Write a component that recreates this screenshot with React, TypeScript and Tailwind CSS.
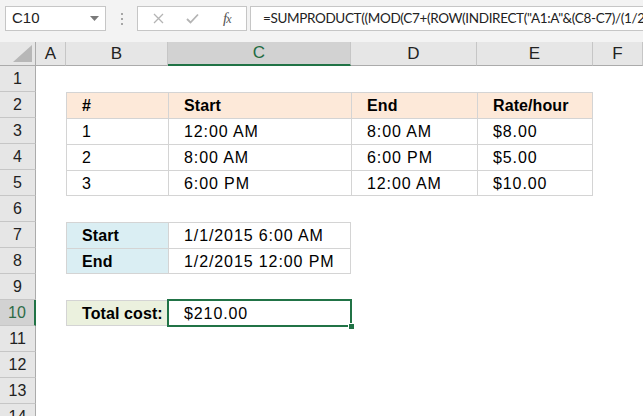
import React from 'react';

type Cell = { text?: string; bold?: boolean; bg?: string; border?: string };

const cols = ['A', 'B', 'C', 'D', 'E', 'F'];

// border classes per cell: t/l always for table cells, r/b at table edges
const rows: Record<number, Record<string, Cell>> = {
  2: {
    B: { text: '#', bold: true, bg: 'bg-[#fde9d9]', border: 'border-t border-l' },
    C: { text: 'Start', bold: true, bg: 'bg-[#fde9d9]', border: 'border-t border-l' },
    D: { text: 'End', bold: true, bg: 'bg-[#fde9d9]', border: 'border-t border-l' },
    E: { text: 'Rate/hour', bold: true, bg: 'bg-[#fde9d9]', border: 'border-t border-l border-r' },
  },
  3: {
    B: { text: '1', border: 'border-t border-l' },
    C: { text: '12:00 AM', border: 'border-t border-l' },
    D: { text: '8:00 AM', border: 'border-t border-l' },
    E: { text: '$8.00', border: 'border-t border-l border-r' },
  },
  4: {
    B: { text: '2', border: 'border-t border-l' },
    C: { text: '8:00 AM', border: 'border-t border-l' },
    D: { text: '6:00 PM', border: 'border-t border-l' },
    E: { text: '$5.00', border: 'border-t border-l border-r' },
  },
  5: {
    B: { text: '3', border: 'border-t border-l border-b' },
    C: { text: '6:00 PM', border: 'border-t border-l border-b' },
    D: { text: '12:00 AM', border: 'border-t border-l border-b' },
    E: { text: '$10.00', border: 'border-t border-l border-r border-b' },
  },
  7: {
    B: { text: 'Start', bold: true, bg: 'bg-[#daeef3]', border: 'border-t border-l' },
    C: { text: '1/1/2015 6:00 AM', border: 'border-t border-l border-r' },
  },
  8: {
    B: { text: 'End', bold: true, bg: 'bg-[#daeef3]', border: 'border-t border-l border-b' },
    C: { text: '1/2/2015 12:00 PM', border: 'border-t border-l border-r border-b' },
  },
  10: {
    B: { text: 'Total cost:', bold: true, bg: 'bg-[#ebf1de]', border: 'border-t border-l border-b' },
    C: { text: '$210.00', border: 'border-t border-l border-r border-b' },
  },
};

const formula =
  '=SUMPRODUCT((MOD(C7+(ROW(INDIRECT("A1:A"&(C8-C7)/(1/24)))-1)*(1/24),1)>=B3:B5)*(MOD(C7+(ROW(INDIRECT("A1:A"&(C8-C7)/(1/24)))-1)*(1/24),1)<C3:C5)*D3:D5/24)';

const FormulaBar: React.FC = () => (
  <div className="h-[42px] bg-[#f3f3f3] flex items-start pt-[6px] pl-[5px]">
    <div className="w-[101px] h-[25px] bg-white border border-[#c6c6c6] flex items-center justify-between pl-[6px] pr-[6px]">
      <span className="text-[15px] text-[#222]">C10</span>
      <svg width="9" height="5" viewBox="0 0 9 5">
        <path d="M0 0 L9 0 L4.5 5 Z" fill="#7a7a7a" />
      </svg>
    </div>
    <div className="w-[31px] h-[25px] flex flex-col items-center justify-center gap-[3px]">
      <span className="w-[2px] h-[2px] bg-[#a6a6a6]" />
      <span className="w-[2px] h-[2px] bg-[#a6a6a6]" />
      <span className="w-[2px] h-[2px] bg-[#a6a6a6]" />
    </div>
    <div className="w-[110px] h-[25px] bg-white border border-[#c6c6c6] flex items-center">
      <svg className="ml-[15px]" width="11" height="11" viewBox="0 0 11 11">
        <path d="M1 1 L10 10 M10 1 L1 10" stroke="#b4b4b4" strokeWidth="1.3" />
      </svg>
      <svg className="ml-[22px]" width="13" height="11" viewBox="0 0 13 11">
        <path d="M1 6 L4.5 9.5 L12 1.5" stroke="#b4b4b4" strokeWidth="1.8" fill="none" />
      </svg>
      <span className="ml-[24px] font-['Liberation_Serif',serif] italic text-[15px] text-[#555] tracking-[-1px]">
        f<span className="text-[12px]">x</span>
      </span>
    </div>
    <div className="ml-[3px] flex-1 h-[25px] bg-white border border-[#c6c6c6] border-r-0 flex items-center pl-[12px] overflow-hidden">
      <span className="font-['Lato',sans-serif] text-[13.5px] tracking-[-0.35px] text-[#222] whitespace-nowrap">{formula}</span>
    </div>
  </div>
);

export default function App() {
  const rowNums = Array.from({ length: 14 }, (_, i) => i + 1);
  return (
    <div className="w-[643px] h-[416px] overflow-hidden bg-white font-['Liberation_Sans',Arial,sans-serif] text-black">
      <FormulaBar />
      <div className="grid grid-cols-[36px_30px_102px_183px_126px_116px_1fr] auto-rows-[26px] grid-rows-[24px]">
        {/* corner */}
        <div className="bg-[#e6e6e6] border-r border-b border-[#ababab] relative">
          <svg className="absolute right-[3px] bottom-[3px]" width="19" height="17" viewBox="0 0 19 17">
            <path d="M19 0 L19 17 L0 17 Z" fill="#b7b7b7" />
          </svg>
        </div>
        {cols.map((c) =>
          c === 'C' ? (
            <div
              key={c}
              className="bg-[#d2d2d2] border-r border-[#c6c6c6] border-b-2 border-b-[#217346] flex items-center justify-center text-[17px] text-[#1e6b41]"
            >
              {c}
            </div>
          ) : (
            <div
              key={c}
              className="bg-[#e6e6e6] border-r border-[#c6c6c6] border-b border-b-[#ababab] flex items-center justify-center text-[17px] text-[#222]"
            >
              {c}
            </div>
          )
        )}

        {rowNums.map((r) => (
          <React.Fragment key={r}>
            {r === 10 ? (
              <div className="bg-[#d2d2d2] border-r-2 border-[#217346] border-b border-b-[#c6c6c6] flex items-center justify-center text-[16px] text-[#2d6b47]">
                {r}
              </div>
            ) : (
              <div className="bg-[#e6e6e6] border-r border-[#ababab] border-b border-b-[#c6c6c6] flex items-center justify-center text-[16px] text-[#222]">
                {r}
              </div>
            )}
            {cols.map((c) => {
              const cell = rows[r]?.[c];
              if (!cell) return <div key={c} />;
              const selected = r === 10 && c === 'C';
              return (
                <div
                  key={c}
                  className={`relative flex items-center pl-[15px] pt-[1px] text-[16px] whitespace-nowrap border-[#d4d4d4] ${cell.border ?? ''} ${cell.bg ?? ''} ${cell.bold ? 'font-bold tracking-[0.1px]' : 'tracking-[0.9px]'}`}
                >
                  {cell.text}
                  {selected && (
                    <>
                      <span className="absolute -left-[2px] -top-[2px] -right-[2px] -bottom-[2px] border-2 border-[#217346]" />
                      <span className="absolute -right-[5px] -bottom-[5px] w-[7px] h-[7px] bg-[#217346] border border-white" />
                    </>
                  )}
                </div>
              );
            })}
          </React.Fragment>
        ))}
      </div>
    </div>
  );
}
